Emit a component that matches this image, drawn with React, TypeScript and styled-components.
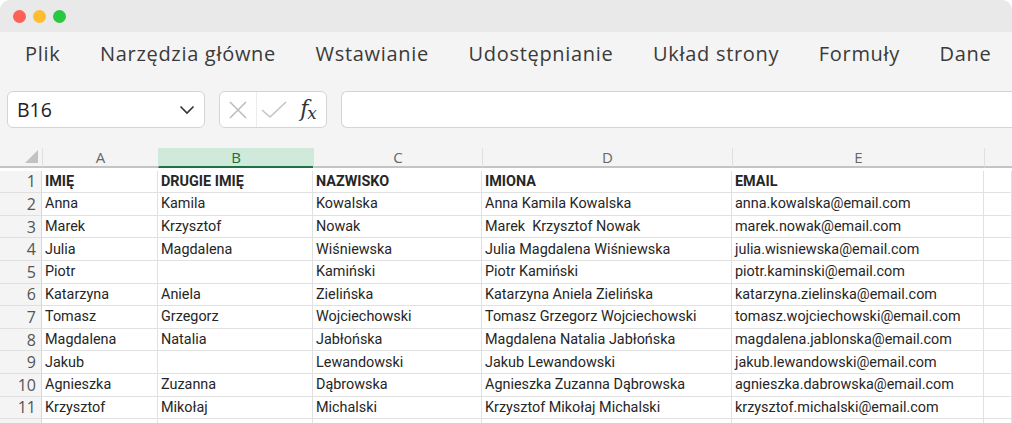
import React from "react";
import styled, { createGlobalStyle } from "styled-components";

const GlobalStyle = createGlobalStyle`
  html, body { margin: 0; padding: 0; background: #ffffff; }
  body { font-family: "Open Sans", "Noto Sans", sans-serif; }
  * { box-sizing: border-box; }
`;

const Window = styled.div`
  width: 1012px;
  height: 423px;
  overflow: hidden;
  background: #f4f4f4;
  border-radius: 10px 10px 0 0;
  display: flex;
  flex-direction: column;
`;

const TitleBar = styled.div`
  height: 32px;
  background: #e9e9e9;
  display: flex;
  align-items: center;
  gap: 7px;
  padding-left: 13px;
  flex-shrink: 0;
`;

const Light = styled.span<{ $color: string }>`
  width: 13px;
  height: 13px;
  border-radius: 50%;
  background: ${(p) => p.$color};
`;

const MenuBar = styled.nav`
  height: 42px;
  display: flex;
  align-items: center;
  gap: 39.5px;
  padding-left: 25px;
  flex-shrink: 0;
`;

const MenuItem = styled.span`
  font-family: "Open Sans", sans-serif;
  font-size: 20px;
  letter-spacing: 0.7px;
  color: #3a3a3a;
  white-space: nowrap;
`;

const FormulaRow = styled.div`
  display: flex;
  align-items: center;
  height: 37px;
  margin-top: 17px;
  padding-left: 7px;
  flex-shrink: 0;
`;

const Box = styled.div`
  height: 37px;
  background: #ffffff;
  border: 1px solid #d4d4d4;
  border-radius: 6px;
  display: flex;
  align-items: center;
`;

const NameBox = styled(Box)`
  width: 198px;
  padding: 0 9px 0 9px;
  justify-content: space-between;
  font-family: "Open Sans", sans-serif;
  font-size: 19.5px;
  color: #222;
`;

const ButtonsBox = styled(Box)`
  width: 108px;
  margin-left: 14px;
`;

const IconCell = styled.div<{ $w: number; $sep?: boolean }>`
  width: ${(p) => p.$w}px;
  height: 100%;
  display: flex;
  align-items: center;
  justify-content: center;
  border-right: ${(p) => (p.$sep ? "1px solid #ececec" : "none")};
`;

const Fx = styled.span`
  font-family: "DejaVu Serif", "Liberation Serif", serif;
  font-style: italic;
  font-size: 22px;
  color: #333;
  letter-spacing: -1px;
  sub {
    font-size: 17px;
    vertical-align: -3px;
  }
`;

const FormulaInput = styled(Box)`
  flex: 1;
  margin-left: 14px;
  border-right: none;
  border-radius: 6px 0 0 6px;
`;

const Sheet = styled.div`
  margin-top: 20px;
  background: #ffffff;
  flex: 1;
  overflow: hidden;
`;

const Grid = styled.div`
  display: grid;
  grid-template-columns: 42px 116px 155px 169px 250px 252px 1fr;
  grid-auto-rows: 22.6px;
  font-family: "Roboto", "Noto Sans", sans-serif;
`;

const Corner = styled.div`
  height: 20px;
  background: #f4f4f4;
  border-bottom: 2px solid #c4c4c4;
  position: relative;
  &::after {
    content: "";
    position: absolute;
    right: 4px;
    bottom: 3px;
    width: 0;
    height: 0;
    border-left: 13px solid transparent;
    border-bottom: 13px solid #c2c2c2;
  }
`;

const ColHead = styled.div<{ $active?: boolean }>`
  height: 20px;
  background: ${(p) => (p.$active ? "#cfe9da" : "#f4f4f4")};
  border-bottom: 2px solid ${(p) => (p.$active ? "#1e7145" : "#c4c4c4")};
  border-left: 1px solid ${(p) => (p.$active ? "#cfe9da" : "#e0e0e0")};
  display: flex;
  align-items: center;
  justify-content: center;
  font-family: "Open Sans", sans-serif;
  font-size: 15px;
  color: ${(p) => (p.$active ? "#1e6b41" : "#666")};
`;

const RowHead = styled.div`
  background: #f4f4f4;
  border-right: 1px solid #d8d8d8;
  border-bottom: 1px solid #e0e0e0;
  display: flex;
  align-items: center;
  justify-content: flex-end;
  padding-right: 5px;
  font-family: "Open Sans", sans-serif;
  font-size: 16px;
  color: #555;
`;

const Cell = styled.div<{ $bold?: boolean }>`
  border-right: 1px solid #e1e1e1;
  border-bottom: 1px solid #e1e1e1;
  padding-left: 3px;
  display: flex;
  align-items: center;
  white-space: pre;
  overflow: hidden;
  font-size: 14.4px;
  font-weight: ${(p) => (p.$bold ? 700 : 400)};
  color: #262626;
`;

const rows: string[][] = [
  ["IMIĘ", "DRUGIE IMIĘ", "NAZWISKO", "IMIONA", "EMAIL"],
  ["Anna", "Kamila", "Kowalska", "Anna Kamila Kowalska", "anna.kowalska@email.com"],
  ["Marek", "Krzysztof", "Nowak", "Marek  Krzysztof Nowak", "marek.nowak@email.com"],
  ["Julia", "Magdalena", "Wiśniewska", "Julia Magdalena Wiśniewska", "julia.wisniewska@email.com"],
  ["Piotr", "", "Kamiński", "Piotr Kamiński", "piotr.kaminski@email.com"],
  ["Katarzyna", "Aniela", "Zielińska", "Katarzyna Aniela Zielińska", "katarzyna.zielinska@email.com"],
  ["Tomasz", "Grzegorz", "Wojciechowski", "Tomasz Grzegorz Wojciechowski", "tomasz.wojciechowski@email.com"],
  ["Magdalena", "Natalia", "Jabłońska", "Magdalena Natalia Jabłońska", "magdalena.jablonska@email.com"],
  ["Jakub", "", "Lewandowski", "Jakub Lewandowski", "jakub.lewandowski@email.com"],
  ["Agnieszka", "Zuzanna", "Dąbrowska", "Agnieszka Zuzanna Dąbrowska", "agnieszka.dabrowska@email.com"],
  ["Krzysztof", "Mikołaj", "Michalski", "Krzysztof Mikołaj Michalski", "krzysztof.michalski@email.com"],
  ["", "", "", "", ""],
];

const menu = ["Plik", "Narzędzia główne", "Wstawianie", "Udostępnianie", "Układ strony", "Formuły", "Dane"];
const cols = ["A", "B", "C", "D", "E", ""];

export default function App() {
  return (
    <>
      <GlobalStyle />
      <Window>
        <TitleBar>
          <Light $color="#fe5f57" />
          <Light $color="#febc2e" />
          <Light $color="#28c840" />
        </TitleBar>
        <MenuBar>
          {menu.map((m) => (
            <MenuItem key={m}>{m}</MenuItem>
          ))}
        </MenuBar>
        <FormulaRow>
          <NameBox>
            <span>B16</span>
            <svg width="16" height="10" viewBox="0 0 16 10">
              <path d="M1.5 1.5 L8 8 L14.5 1.5" fill="none" stroke="#333" strokeWidth="1.6" />
            </svg>
          </NameBox>
          <ButtonsBox>
            <IconCell $w={37} $sep>
              <svg width="20" height="20" viewBox="0 0 20 20">
                <path d="M2 2 L18 18 M18 2 L2 18" stroke="#bdbdbd" strokeWidth="1.6" />
              </svg>
            </IconCell>
            <IconCell $w={33}>
              <svg width="26" height="18" viewBox="0 0 26 18">
                <path d="M1 9 L9 16 L25 1" fill="none" stroke="#c4c4c4" strokeWidth="1.6" />
              </svg>
            </IconCell>
            <IconCell $w={36}>
              <Fx>
                f<sub>x</sub>
              </Fx>
            </IconCell>
          </ButtonsBox>
          <FormulaInput />
        </FormulaRow>
        <Sheet>
          <Grid>
            <Corner />
            {cols.map((c, i) => (
              <ColHead key={i} $active={c === "B"}>
                {c}
              </ColHead>
            ))}
            {rows.map((r, ri) => (
              <React.Fragment key={ri}>
                <RowHead>{ri + 1}</RowHead>
                {r.map((v, ci) => (
                  <Cell key={ci} $bold={ri === 0}>
                    {v}
                  </Cell>
                ))}
                <Cell />
              </React.Fragment>
            ))}
          </Grid>
        </Sheet>
      </Window>
    </>
  );
}
